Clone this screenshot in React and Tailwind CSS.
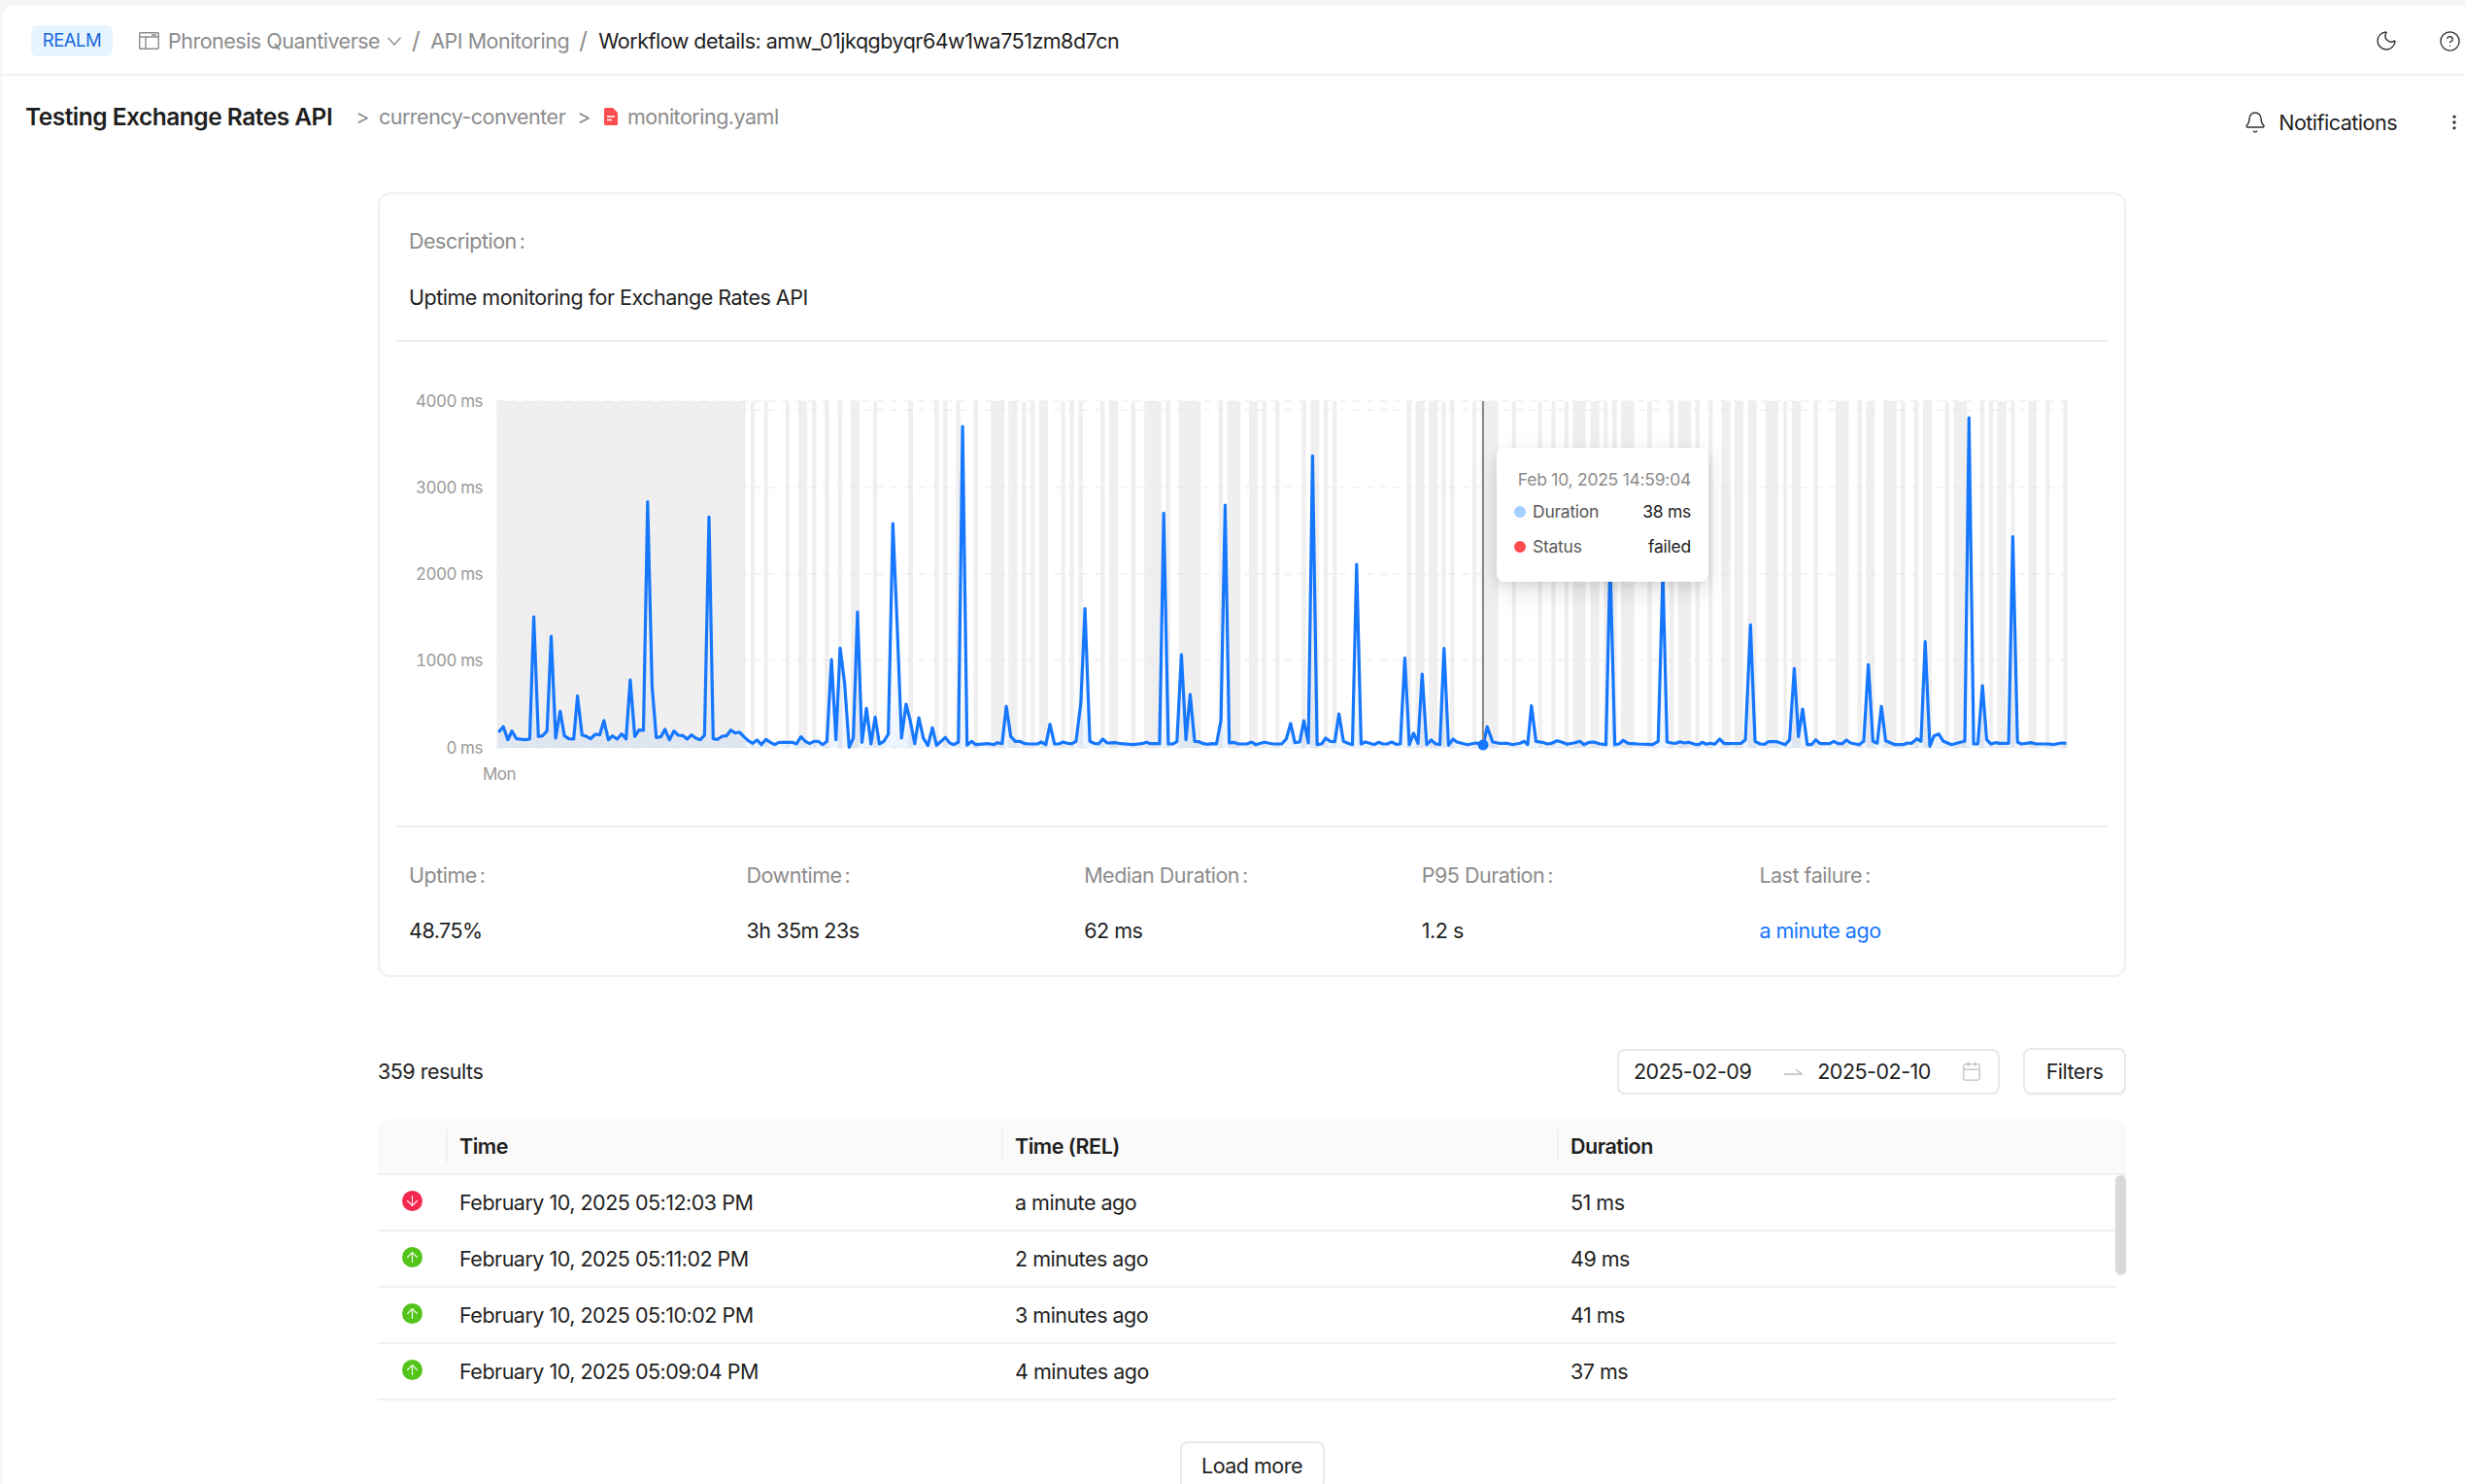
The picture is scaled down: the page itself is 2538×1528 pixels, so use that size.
import { Bell, Calendar, CircleHelp, EllipsisVertical, Moon, ArrowDown, ArrowUp } from 'lucide-react'

// chart data is traced from crops of the picture, each crop has its own x origin and scale
const fromCrop = (pts, x0, sx) => pts.map(([x, y]) => [x0 + x / sx, 380 + y / 3])

const line = [
  ...fromCrop([[373,1122],[387,1105],[400,1145],[412,1118],[425,1142],[450,1145],[463,1143],[475,765],[488,1135],[500,1133],[513,1118],[525,825],[538,1140],[551,1057],[563,1133],[576,1142],[590,1143],[601,1010],[614,1130],[627,1135],[639,1142],[652,1128],[665,1130],[677,1086],[690,1145],[702,1133],[715,1143],[728,1127],[741,1142],[753,960],[766,1135],[778,1115],[791,1116],[803,410],[816,980],[828,1138],[841,1136],[853,1113],[866,1145],[879,1118],[891,1131],[904,1132],[917,1143],[930,1130],[942,1140],[955,1145],[967,1131],[980,457],[992,1142],[1005,1144],[1018,1134],[1030,1133],[1043,1115],[1055,1124],[1068,1122],[1081,1136],[1093,1148],[1106,1156],[1119,1146],[1131,1160],[1144,1144],[1157,1153],[1169,1160],[1182,1153],[1195,1153],[1207,1153],[1220,1153],[1232,1158],[1245,1136],[1258,1150],[1270,1157],[1283,1150],[1295,1150],[1308,1160],[1320,1150],[1333,897],[1346,1145],[1358,862],[1371,970],[1384,1168],[1396,1140],[1408,750],[1421,1153],[1434,1048],[1447,1158],[1459,1075],[1471,1158],[1484,1150],[1497,1128],[1510,477],[1522,780],[1535,1140],[1548,1035],[1560,1085]], 380, 2.8),
  ...fromCrop([[5,1157],[17,1077],[30,1140],[43,1163],[56,1108],[68,1162],[81,1150],[93,1138],[106,1155],[118,1160],[131,1152],[143,177],[156,1162],[169,1150],[181,1160],[219,1157],[232,1160],[244,1154],[257,1157],[269,1042],[282,1135],[295,1150],[307,1150],[320,1156],[333,1158],[358,1158],[370,1152],[383,1160],[395,1097],[408,1158],[420,1158],[433,1152],[445,1156],[458,1157],[470,1150],[484,1030],[496,740],[510,1150],[522,1156],[535,1158],[547,1143],[560,1155],[585,1154],[598,1157],[635,1160],[660,1157],[673,1153],[685,1157],[711,1157],[723,445],[736,1158],[749,1158],[761,1151],[774,882],[787,1145],[799,1005],[812,1150],[825,1151],[837,1157],[850,1159],[862,1157],[875,1158],[888,1085],[900,420],[912,1155],[925,1153],[938,1158],[963,1158],[976,1152],[988,1160],[1013,1153],[1038,1158],[1063,1158],[1076,1143],[1089,1095],[1101,1154],[1115,1152],[1127,1086],[1140,1155],[1152,268],[1165,1160],[1178,1158],[1190,1140],[1203,1150],[1216,1151],[1228,1065],[1241,1150],[1254,1156],[1267,1160],[1279,603],[1292,1158],[1304,1152],[1317,1156],[1330,1160],[1342,1153],[1355,1158],[1367,1158],[1380,1152],[1393,1159],[1405,1158],[1418,893],[1431,1160],[1443,1125],[1456,1156],[1468,942],[1481,1160],[1494,1146],[1506,1157],[1519,1160],[1531,863],[1544,1162],[1557,1143]], 940, 2.8),
  ...fromCrop([[0,1152],[25,1160],[45,1155],[63,1160],[72,1105],[85,1152],[100,1156],[120,1156],[132,1160],[150,1156],[160,1150],[168,1160],[177,1040],[188,1150],[203,1153],[215,1158],[225,1156],[238,1148],[250,1153],[262,1159],[280,1154],[292,1150],[302,1160],[314,1153],[325,1152],[340,1158],[354,1160],[364,590],[375,1160],[385,1158],[395,1147],[407,1156],[430,1158],[465,1160],[478,1150],[489,630],[499,1152],[510,1155],[520,1156],[530,1151],[540,1155],[550,1153],[565,1159],[575,1160],[582,1153],[592,1159],[602,1156],[612,1159],[624,1143],[635,1157],[675,1156],[685,1145],[697,790],[708,1150],[720,1158],[730,1159],[740,1151],[760,1151],[780,1160],[790,1145],[801,925],[811,1135],[821,1050],[832,1160],[842,1160],[852,1145],[863,1157],[885,1157],[895,1150],[905,1157],[915,1157],[925,1146],[935,1155],[955,1160],[966,1150],[977,913],[988,1150],[998,1156],[1008,1042],[1018,1148],[1040,1160],[1060,1160],[1070,1155],[1080,1156],[1092,1142],[1102,1150],[1112,842],[1123,1165],[1133,1133],[1144,1127],[1155,1150],[1175,1160],[1195,1153],[1206,1150],[1216,150],[1227,1158],[1237,1158],[1248,978],[1258,1145],[1268,1158],[1278,1154],[1290,1156],[1300,1156],[1310,1156],[1320,518],[1331,1152],[1340,1158],[1365,1154],[1375,1158],[1405,1158],[1415,1160],[1435,1155],[1447,1156]], 1500, 2.306),
]

const bandCrop = (list, x0, sx) => list.map(([a, b]) => [x0 + a / sx, x0 + b / sx])

const bands = [
  ...bandCrop([[368,1085],[1100,1112],[1138,1150],[1201,1212],[1238,1263],[1277,1289],[1314,1326],[1352,1364],[1389,1414],[1453,1465],[1555,1568]], 380, 2.8),
  ...bandCrop([[62,74],[87,99],[124,137],[175,187],[225,263],[275,301],[314,326],[339,351],[364,389],[427,439],[452,464],[477,490],[541,553],[566,591],[629,641],[667,717],[729,742],[767,830],[881,893],[906,944],[969,994],[1007,1019],[1045,1057],[1121,1133],[1146,1171],[1184,1196],[1210,1222],[1423,1436],[1449,1474],[1487,1512],[1524,1536]], 940, 2.8),
  ...bandCrop([[10,22],[78,90],[105,158],[200,212],[281,293],[322,334],[362,375],[389,428],[443,470],[484,496],[510,524],[537,578],[618,632],[686,700],[713,753],[767,780],[808,820],[848,875],[888,915],[929,956]], 1490, 3),
  ...bandCrop([[24,62],[78,90],[105,132],[172,185],[240,280],[307,321],[334,360],[388,428],[442,455],[483,496],[510,537],[578,591],[605,645],[686,699],[713,726],[740,767],[781,793],[835,861],[889,901],[943,956]], 1810, 3),
]

const ticks = [['4000 ms', 413], ['3000 ms', 502], ['2000 ms', 591], ['1000 ms', 680], ['0 ms', 770]]

const stats = [
  ['Uptime', '48.75%'],
  ['Downtime', '3h 35m 23s'],
  ['Median Duration', '62 ms'],
  ['P95 Duration', '1.2 s'],
  ['Last failure', 'a minute ago'],
]

const rows = [
  [false, 'February 10, 2025 05:12:03 PM', 'a minute ago', '51 ms'],
  [true, 'February 10, 2025 05:11:02 PM', '2 minutes ago', '49 ms'],
  [true, 'February 10, 2025 05:10:02 PM', '3 minutes ago', '41 ms'],
  [true, 'February 10, 2025 05:09:04 PM', '4 minutes ago', '37 ms'],
]

function Chart() {
  const pts = line.map(([x, y]) => `${x.toFixed(1)},${y.toFixed(1)}`).join(' ')
  const area = `${pts} ${line[line.length - 1][0].toFixed(1)},770 ${line[0][0].toFixed(1)},770`
  return (
    <div className="relative h-[498px]">
      <svg className="block tabular-nums" width="1796" height="498" viewBox="391 352 1796 498">
        <defs>
          <linearGradient id="fade" x1="0" y1="0" x2="0" y2="1">
            <stop offset="0.65" stopColor="#1677ff" stopOpacity="0" />
            <stop offset="1" stopColor="#1677ff" stopOpacity="0.08" />
          </linearGradient>
        </defs>
        {bands.map(([a, b]) => (
          <rect key={a} x={a} y="413" width={b - a} height="357" fill="#efefef" />
        ))}
        {[413, 422, 502, 591, 680, 770].map(y => (
          <line key={y} x1="511" x2="2128" y1={y} y2={y} stroke="#e8e8e8" strokeWidth="1.5" strokeDasharray="7 7" opacity="0.6" />
        ))}
        {ticks.map(([label, y]) => (
          <text key={label} x="497" y={y + 6} textAnchor="end" fontSize="17" fill="#9a9a9a">{label}</text>
        ))}
        <text x="497" y="803" fontSize="17" fill="#9a9a9a">Mon</text>
        <polygon points={area} fill="url(#fade)" />
        <polyline points={pts} fill="none" stroke="#1677ff" strokeWidth="3.2" strokeLinejoin="round" />
        <line x1="1527" x2="1527" y1="413" y2="767" stroke="#8a8a8a" strokeWidth="2" />
        <circle cx="1527" cy="767" r="5.5" fill="#1677ff" />
      </svg>
      <div className="absolute left-[1150px] top-[109px] w-[218px] h-[138px] rounded-lg bg-white shadow-[0_9px_28px_rgba(0,0,0,0.12),0_3px_10px_rgba(0,0,0,0.07)] px-[18px] pt-[24px] text-[17.5px] tracking-[-0.25px] leading-[18px]">
        <div className="text-right text-[#8c8c8c] whitespace-nowrap">Feb 10, 2025 14:59:04</div>
        <div className="mt-[15px] flex items-center text-[#595959]">
          <span className="w-3 h-3 rounded-full bg-[#a3d0ff] mr-[7px]"></span>
          Duration
          <span className="ml-auto text-[#1f1f1f]">38 ms</span>
        </div>
        <div className="mt-[18px] flex items-center text-[#595959]">
          <span className="w-3 h-3 rounded-full bg-[#ff4d4f] mr-[7px]"></span>
          Status
          <span className="ml-auto text-[#1f1f1f]">failed</span>
        </div>
      </div>
    </div>
  )
}

export default function App() {
  return (
    <div className="h-[1528px] overflow-hidden bg-[#f5f5f5] pt-[6px] pl-[2px] font-['Inter',sans-serif] text-[21.5px] tracking-[-0.5px] text-[#1f1f1f]">
      <div className="h-full bg-white rounded-tl-xl">
        <header className="h-[72px] border-b-2 border-[#f0f0f0] flex items-center pl-[30px] pt-[2px]">
          <span className="w-[84px] h-8 flex items-center justify-center rounded-md bg-[#e6f4ff] text-[#1668dc] text-[18.5px]">REALM</span>
          <svg className="ml-[27px]" width="21" height="18" viewBox="0 0 21 18" fill="none" stroke="#8c8c8c" strokeWidth="1.4">
            <rect x="0.7" y="0.7" width="19.6" height="16.6" rx="1" />
            <path d="M0.7 5h19.6M7 5v12.3M13 3h5" />
          </svg>
          <span className="ml-[9px] text-[#8c8c8c]">Phronesis Quantiverse</span>
          <svg className="ml-[8px]" width="14" height="9" viewBox="0 0 14 9" fill="none" stroke="#8c8c8c" strokeWidth="1.4">
            <path d="M0.5 0.7L7 8l6.5-7.3" />
          </svg>
          <span className="ml-[11px] text-[#8c8c8c] text-[24px]">/</span>
          <span className="ml-[11px] text-[#8c8c8c]">API Monitoring</span>
          <span className="ml-[10px] text-[#8c8c8c] text-[24px]">/</span>
          <span className="ml-[12px]">Workflow details: amw_01jkqgbyqr64w1wa751zm8d7cn</span>
          <Moon className="ml-auto text-[#333]" size={24} strokeWidth={1.4} />
          <CircleHelp className="ml-[42px] mr-[4px] text-[#333]" size={23} strokeWidth={1.4} />
        </header>

        <div className="h-[120px] flex items-start pl-6">
          <h1 className="mt-[26px] text-[24.5px] leading-[32px] font-semibold">Testing Exchange Rates API</h1>
          <span className="mt-[26px] ml-[24px] leading-[32px] text-[#8c8c8c]">&gt;</span>
          <span className="mt-[26px] ml-[10px] leading-[32px] text-[#8c8c8c]">currency-conventer</span>
          <span className="mt-[26px] ml-3 leading-[32px] text-[#8c8c8c]">&gt;</span>
          <svg className="mt-[33px] ml-[14px]" width="14" height="18" viewBox="0 0 14 18">
            <path d="M1.5 0H9l5 5v11.5a1.5 1.5 0 0 1-1.5 1.5h-11A1.5 1.5 0 0 1 0 16.5v-15A1.5 1.5 0 0 1 1.5 0z" fill="#ff4d4f" />
            <path d="M3 9h8M3 12.5h5" stroke="#fff" strokeWidth="1.6" />
          </svg>
          <span className="mt-[26px] ml-[10px] leading-[32px] text-[#8c8c8c]">monitoring.yaml</span>
          <div className="ml-auto mt-[32px] flex items-center">
            <Bell size={24} strokeWidth={1.4} className="text-[#333]" />
            <span className="ml-[12px] leading-[32px]">Notifications</span>
            <EllipsisVertical className="ml-[49px] mr-[1px] text-[#333]" size={20} strokeWidth={2} />
          </div>
        </div>

        <main className="ml-[387px] w-[1800px]">
          <section className="h-[808px] rounded-[13px] border-2 border-[#f0f0f0] px-[17px]">
            <div className="h-[152px] border-b-2 border-[#f0f0f0] px-[13px] pt-[32px]">
              <div className="text-[#8c8c8c] leading-8">Description<span className="ml-[3px]">:</span></div>
              <div className="mt-[26px] leading-8">Uptime monitoring for Exchange Rates API</div>
            </div>
            <div className="-mx-[17px]">
              <Chart />
            </div>
            <div className="border-t-2 border-[#f0f0f0] px-[13px] pt-[33px]">
              <div className="grid grid-cols-5 w-[1738px]">
                {stats.map(([label, value]) => (
                  <div key={label}>
                    <div className="text-[#8c8c8c] leading-8">{label}<span className="ml-[3px]">:</span></div>
                    <div className={`mt-[25px] leading-8 ${label === 'Last failure' ? 'text-[#1677ff]' : ''}`}>{value}</div>
                  </div>
                ))}
              </div>
            </div>
          </section>

          <div className="mt-[73px] h-12 flex items-center">
            <span>359 results</span>
            <div className="ml-auto w-[394px] h-[47px] rounded-lg border-2 border-[#e8e8e8] flex items-center pl-[15px] pr-[16px]">
              <span>2025-02-09</span>
              <svg className="ml-[34px]" width="19" height="10" viewBox="0 0 19 10" fill="none" stroke="#bfbfbf" strokeWidth="1.5">
                <path d="M0 8h18l-6-5" />
              </svg>
              <span className="ml-[15px]">2025-02-10</span>
              <Calendar className="ml-auto text-[#bfbfbf]" size={22} strokeWidth={1.4} />
            </div>
            <button className="ml-[24px] w-[106px] h-[48px] rounded-lg border-2 border-[#e8e8e8] shadow-[0_2px_0_rgba(0,0,0,0.02)]">Filters</button>
          </div>

          <div className="mt-[25px] relative">
            <div className="h-[58px] rounded-t-[13px] bg-[#fafafa] border-b-2 border-[#f0f0f0] grid grid-cols-[70px_572px_572px_1fr] items-center font-semibold">
              <div></div>
              <div className="border-l-2 border-[#f0f0f0] pl-[12px] leading-[34px]">Time</div>
              <div className="border-l-2 border-[#f0f0f0] pl-[12px] leading-[34px]">Time (REL)</div>
              <div className="border-l-2 border-[#f0f0f0] pl-[12px] leading-[34px]">Duration</div>
            </div>
            <div className="w-[1789px]">
              {rows.map(([up, time, rel, dur]) => (
                <div key={time} className="h-[58px] border-b-2 border-[#f0f0f0] grid grid-cols-[70px_572px_572px_1fr] items-center">
                  <div className="flex justify-center">
                    <span className={`w-[21px] h-[21px] rounded-full flex items-center justify-center -mt-[3px] ${up ? 'bg-[#52c41a]' : 'bg-[#f5294f]'}`}>
                      {up ? <ArrowUp size={17} strokeWidth={1.5} className="text-white" /> : <ArrowDown size={17} strokeWidth={1.5} className="text-white" />}
                    </span>
                  </div>
                  <div className="pl-[14px]">{time}</div>
                  <div className="pl-[14px]">{rel}</div>
                  <div className="pl-[14px]">{dur}</div>
                </div>
              ))}
            </div>
            <div className="absolute right-0 top-[58px] w-[11px] h-[103px] rounded-md bg-[#d9d9d9]"></div>
            <div className="mt-[42px] flex justify-center">
              <button className="w-[149px] h-[50px] rounded-lg border-2 border-[#e8e8e8]">Load more</button>
            </div>
          </div>
        </main>
      </div>
    </div>
  )
}
